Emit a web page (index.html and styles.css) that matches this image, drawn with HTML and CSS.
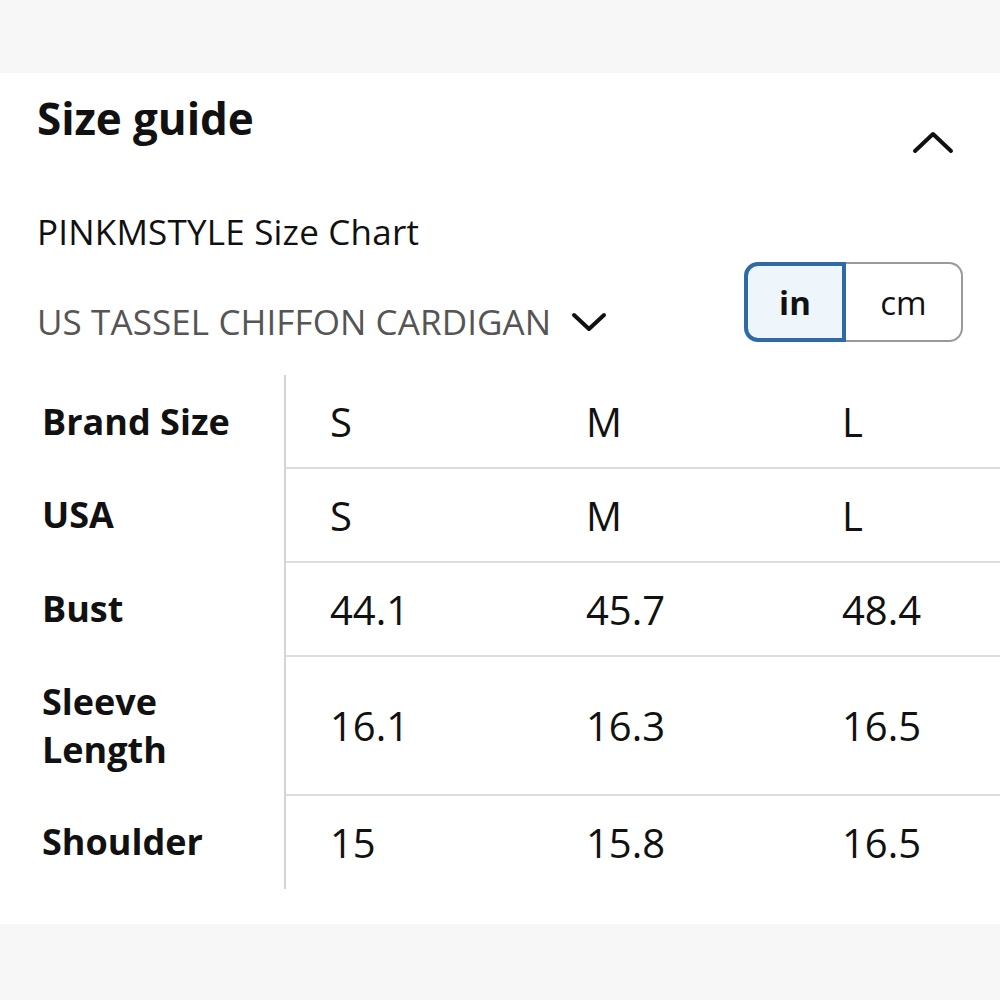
FILE: index.html
```html
<!DOCTYPE html>
<html lang="en">
<head>
    <meta charset="UTF-8">
    <meta name="viewport" content="width=device-width, initial-scale=1.0">
    <title>Size guide</title>
    <link rel="stylesheet" href="styles.css">
</head>
<body>
    <!-- Bande grise du haut -->
    <div class="band"></div>

    <main class="panel">
        <div class="panel-head">
            <h1>Size guide</h1>
            <svg class="chevron-up" width="42" height="24" viewBox="0 0 42 24">
                <path d="M3 21 L21 4 L39 21" fill="none" stroke="#111" stroke-width="4" stroke-linecap="round" stroke-linejoin="round"/>
            </svg>
        </div>

        <p class="chart-name">PINKMSTYLE Size Chart</p>

        <div class="chart-bar">
            <div class="product">
                <span>US TASSEL CHIFFON CARDIGAN</span>
                <svg width="36" height="22" viewBox="0 0 36 22">
                    <path d="M3 4 L18 18 L33 4" fill="none" stroke="#111" stroke-width="4" stroke-linecap="round" stroke-linejoin="round"/>
                </svg>
            </div>
            <div class="units">
                <button class="unit active">in</button>
                <button class="unit">cm</button>
            </div>
        </div>

        <table class="sizes">
            <tr class="first">
                <th>Brand Size</th>
                <td>S</td><td>M</td><td>L</td>
            </tr>
            <tr>
                <th>USA</th>
                <td>S</td><td>M</td><td>L</td>
            </tr>
            <tr>
                <th>Bust</th>
                <td>44.1</td><td>45.7</td><td>48.4</td>
            </tr>
            <tr class="tall">
                <th>Sleeve<br>Length</th>
                <td>16.1</td><td>16.3</td><td>16.5</td>
            </tr>
            <tr>
                <th>Shoulder</th>
                <td>15</td><td>15.8</td><td>16.5</td>
            </tr>
        </table>
    </main>

    <div class="band band-bottom"></div>
</body>
</html>
```

FILE: styles.css
```css
/* Base */
body, html {
    margin: 0;
    padding: 0;
    background: #fff;
    font-family: "Open Sans", "Liberation Sans", sans-serif;
    color: #111;
    overflow: hidden;
}

/* Bandes grises */
.band {
    height: 73px;
    background: #f7f7f7;
}

.band-bottom {
    height: 80px;
    margin-top: 35px;
}

.panel {
    padding: 0 0 0 37px;
}

/* En-tete */
.panel-head {
    display: flex;
    justify-content: space-between;
    align-items: flex-start;
    padding-right: 46px;
    height: 81px;
}

h1 {
    margin: 16px 0 0 0;
    font-size: 44px;
    font-weight: 700;
    letter-spacing: -0.1px;
    line-height: 58px;
}

.chevron-up {
    margin-top: 57px;
}

.chart-name {
    margin: 56px 0 0 0;
    font-size: 35px;
    line-height: 44px;
    letter-spacing: 0.2px;
}

/* Ligne produit + unites */
.chart-bar {
    display: flex;
    justify-content: space-between;
    align-items: flex-start;
    padding-right: 37px;
    margin-top: 8px;
}

.product {
    display: flex;
    align-items: center;
    gap: 20px;
    margin-top: 38px;
    font-size: 35px;
    line-height: 44px;
    letter-spacing: 0.1px;
    color: #555;
}

.units {
    display: flex;
}

.unit {
    font-family: inherit;
    font-size: 33px;
    height: 80px;
    background: #fff;
    color: #111;
    border: 2px solid #999;
    border-left: none;
    border-radius: 0 14px 14px 0;
    width: 117px;
    padding: 0;
}

.unit.active {
    width: 102px;
    font-weight: 700;
    background: #eef6fc;
    border: 4px solid #2d6aa6;
    border-radius: 14px 0 0 14px;
}

/* Tableau */
.sizes {
    margin: 31px 0 0 -37px;
    border-collapse: collapse;
    table-layout: fixed;
    width: 1000px;
}

.sizes th {
    width: 242px;
    padding: 0 0 0 42px;
    text-align: left;
    font-size: 36px;
    font-weight: 700;
    line-height: 48px;
    border-right: 2px solid #d4d4d4;
}

.sizes td {
    width: 212px;
    padding: 0 0 0 44px;
    font-size: 40px;
    border-bottom: 2px solid #ddd;
}

.sizes td:last-child {
    width: auto;
}

.sizes tr {
    height: 94px;
}

.sizes tr.first {
    height: 93px;
}

.sizes tr.tall {
    height: 139px;
}

.sizes tr:last-child td {
    border-bottom: none;
}
```
